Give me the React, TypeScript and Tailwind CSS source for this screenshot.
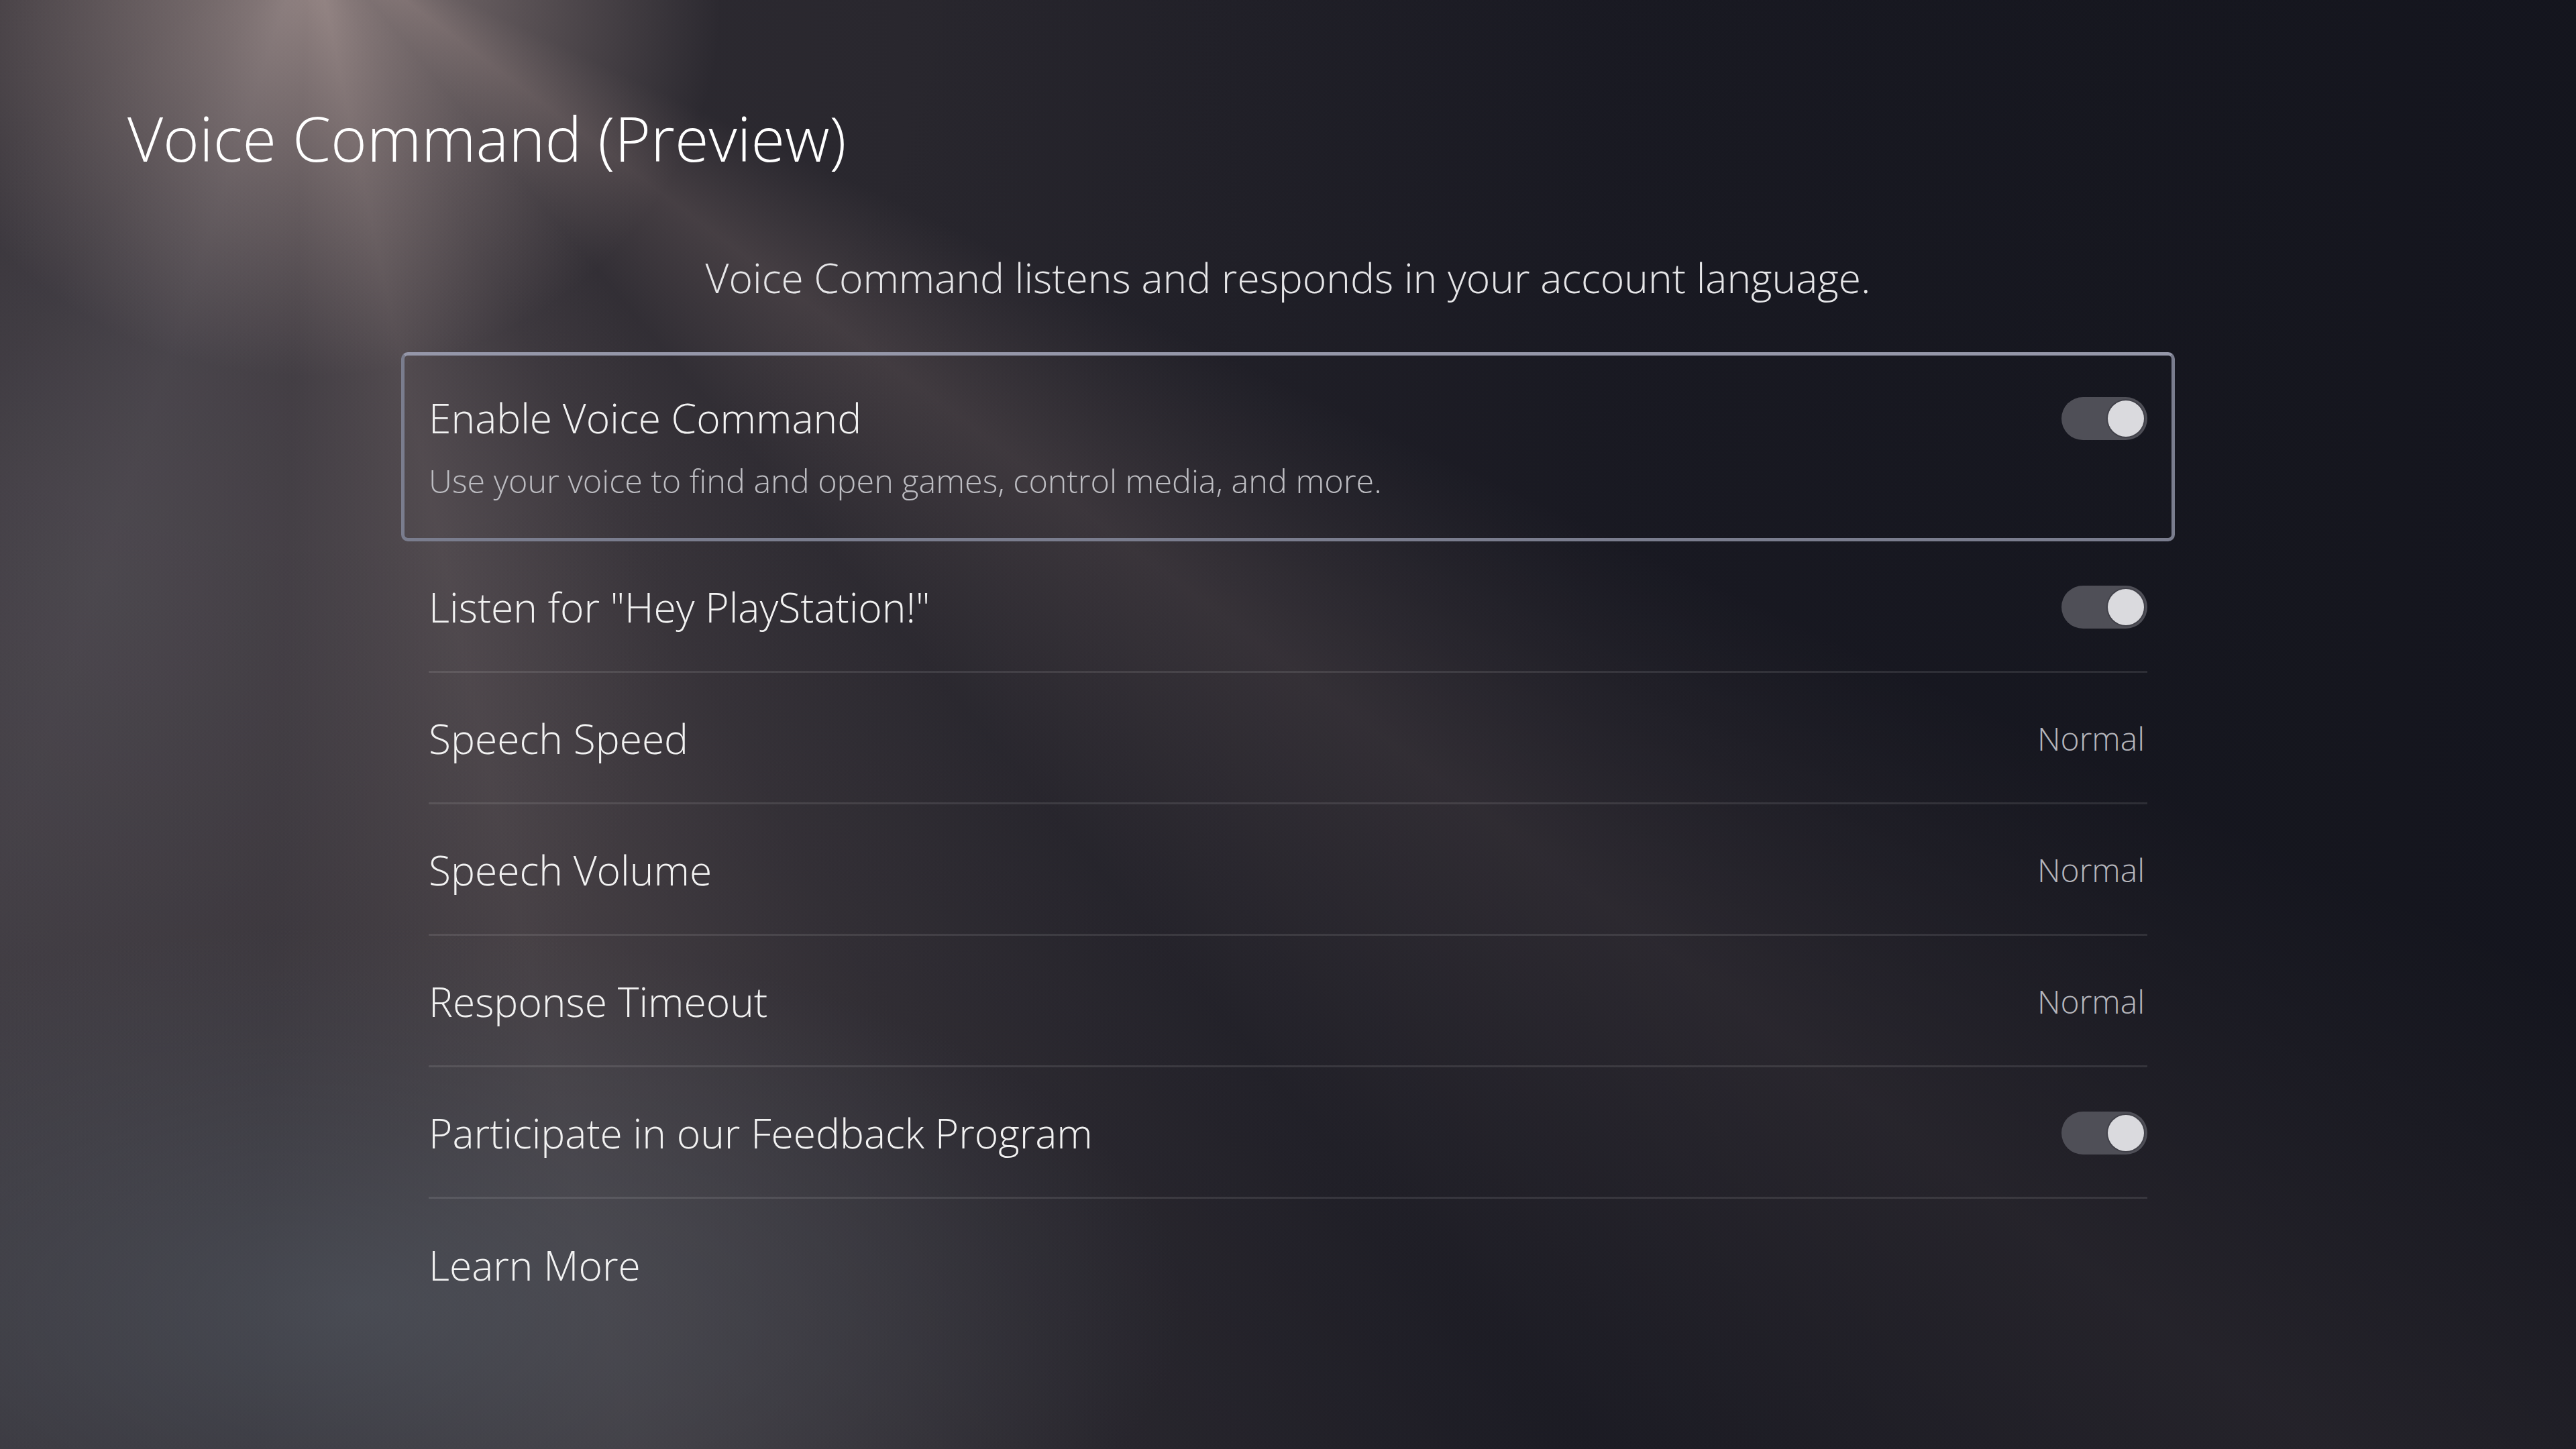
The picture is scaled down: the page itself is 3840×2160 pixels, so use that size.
import React from "react";

function Toggle() {
  return (
    <div className="w-[128px] h-[64px] rounded-full bg-[#4f4f57] p-[5px] flex justify-end items-center shrink-0">
      <div className="w-[54px] h-[54px] rounded-full bg-[#dadade] shadow-[0_0_0_2px_rgba(40,40,48,0.35)]" />
    </div>
  );
}

function Row({ label, value, toggle, last }: { label: string; value?: string; toggle?: boolean; last?: boolean }) {
  return (
    <div className={"h-[196px] pt-[4px] flex items-center justify-between " + (last ? "" : "border-b-[3px] border-white/[0.1]")}>
      <span className="text-[60.5px] leading-none text-[#f2f2f2]">{label}</span>
      {toggle ? <Toggle /> : null}
      {value ? <span className="pr-[4px] text-[48px] leading-none text-[#b6b6bc]">{value}</span> : null}
    </div>
  );
}

export default function App() {
  return (
    <div className="w-full h-screen overflow-hidden bg-[#16171f] text-white font-['Open_Sans',sans-serif] font-light bg-[image:radial-gradient(ellipse_32%_26%_at_14%_90%,rgba(88,96,106,0.55),transparent),radial-gradient(ellipse_16%_26%_at_12%_0%,rgba(190,170,166,0.62),transparent),radial-gradient(ellipse_22%_45%_at_4%_40%,rgba(95,92,100,0.3),transparent),radial-gradient(circle_at_12%_-5%,transparent_22%,rgba(20,21,29,0.5)_78%),conic-gradient(from_90deg_at_12%_-5%,transparent_0deg,transparent_25deg,rgba(175,150,146,0.2)_37deg,rgba(160,140,140,0.05)_50deg,rgba(160,140,140,0.12)_62deg,rgba(175,155,152,0.26)_78deg,rgba(160,140,140,0.12)_92deg,rgba(150,140,145,0.18)_108deg,rgba(150,140,145,0.06)_125deg,transparent_145deg),linear-gradient(90deg,#343036_0%,#29272e_35%,#1b1b24_62%,#15161f_100%)]">
      <div className="pl-[190px] pt-[160px]">
        <h1 className="text-[92px] leading-none text-white">Voice Command (Preview)</h1>
      </div>
      <div className="mx-auto w-[2562px]">
        <p className="mt-[132px] text-center text-[60.5px] leading-none text-[#e6e6e8]">
          Voice Command listens and responds in your account language.
        </p>
        <div className="mt-[80px] -mx-[41px] h-[282px] border-[5px] border-[#7a7d8e] border-t-[#9597a9] rounded-[10px] px-[36px] pt-[64px]">
          <div className="flex items-center justify-between h-[60px]">
            <span className="text-[60.5px] leading-none text-[#f2f2f2]">Enable Voice Command</span>
            <Toggle />
          </div>
          <p className="mt-[38px] text-[48.5px] leading-none text-[#bdbdc2]">
            Use your voice to find and open games, control media, and more.
          </p>
        </div>
        <div className="flex flex-col">
          <Row label={'Listen for "Hey PlayStation!"'} toggle />
          <Row label="Speech Speed" value="Normal" />
          <Row label="Speech Volume" value="Normal" />
          <Row label="Response Timeout" value="Normal" />
          <Row label="Participate in our Feedback Program" toggle />
          <Row label="Learn More" last />
        </div>
      </div>
    </div>
  );
}
